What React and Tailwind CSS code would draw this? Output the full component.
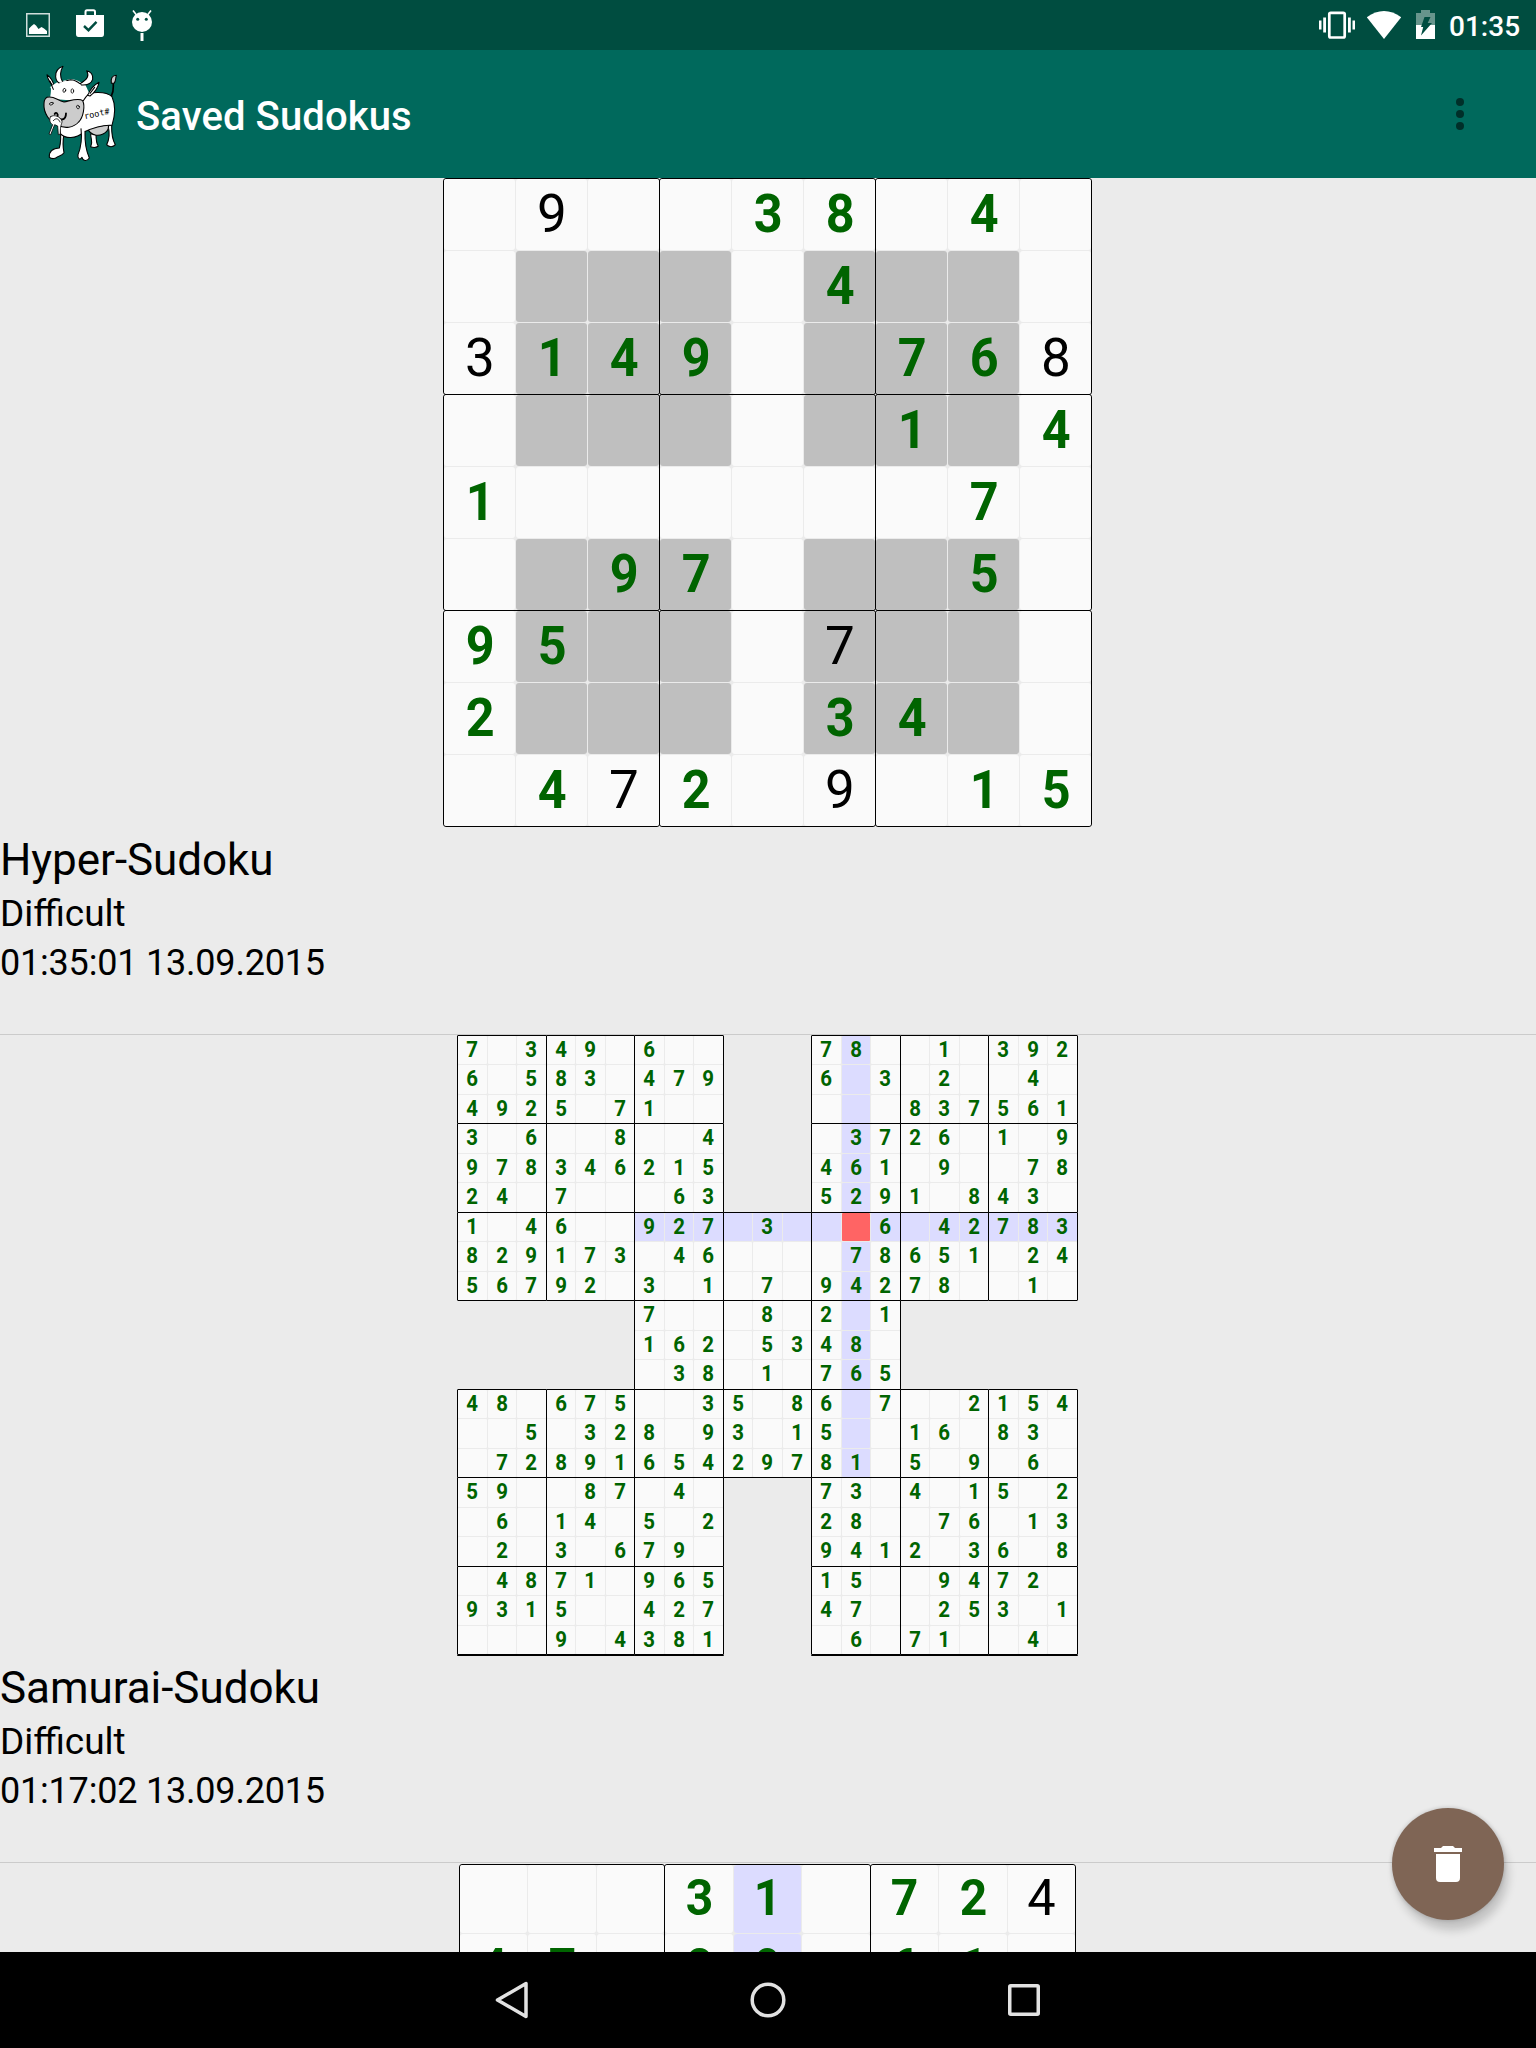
import React from "react";

const HYPER = [
  ".9..38.4.",
  ".....4...",
  "3149..768",
  "......1.4",
  "1......7.",
  "..97...5.",
  "95...7...",
  "2....34..",
  ".472.9.15",
];
const HYPER_ENTERED = ["0-1", "2-0", "2-8", "6-5", "8-2", "8-5"];

const SAMURAI = [
  "7.349.6..   78..1.392",
  "6.583.479   6.3.2..4.",
  "4925.71..   ...837561",
  "3.6..8..4   .3726.1.9",
  "978346215   461.9..78",
  "24.7...63   5291.843.",
  "1.46..927.3...6.42783",
  "829173.46....78651.24",
  "56792.3.1.7.94278..1.",
  "      7...8.2.1      ",
  "      162.5348.      ",
  "      .38.1.765      ",
  "48.675..35.86.7..2154",
  "..5.328.93.15..16.83.",
  ".7289165429781.5.9.6.",
  "59..87.4.   73.4.15.2",
  ".6.14.5.2   28..76.13",
  ".2.3.679.   9412.36.8",
  ".4871.965   15..9472.",
  "9315..427   47..253.1",
  "...9.4381   .6.71..4.",
];

const THIRD = ["...31.724", "47.89.61.", "........."];

const isHyperCell = (r, c) => r % 4 !== 0 && c % 4 !== 0;

const hyperTone = (r, c) => (isHyperCell(r, c) ? "bg-[#bfbfbf]" : "bg-[#fafafa]");
const samuraiTone = (r, c) => {
  if (r === 6 && c === 13) return "bg-[#ff6464]";
  if ((r === 6 && c >= 6) || (c === 13 && r < 15)) return "bg-[#dcdcff]";
  return "bg-[#fafafa]";
};
const thirdTone = (r, c) => (c === 4 ? "bg-[#dcdcff]" : "bg-[#fafafa]");

function Board({ rows, boardClass, boxClass, lastRowClass = "", boxCols, boxRows, cellClass, digitClass, tone, entered }) {
  const boxes = [];
  for (let br = 0; br < rows.length / 3; br++) {
    for (let bc = 0; bc < rows[0].length / 3; bc++) boxes.push([br, bc]);
  }
  return (
    <div className={boardClass}>
      {boxes.map(([br, bc]) => {
        if (rows[br * 3][bc * 3] === " ") return <div key={br + "-" + bc} />;
        const edge = br * 3 + 3 === rows.length ? lastRowClass : "";
        return (
          <div
            key={br + "-" + bc}
            className={`-mr-px -mb-px grid gap-px border border-black ${boxClass} ${edge} ${boxCols[bc % 2]} ${boxRows[br % 2]}`}
          >
            {[0, 1, 2, 3, 4, 5, 6, 7, 8].map((i) => {
              const r = br * 3 + Math.floor(i / 3);
              const c = bc * 3 + (i % 3);
              const value = rows[r][c];
              return (
                <div key={i} className={`flex items-center justify-center ${cellClass} ${tone(r, c)}`}>
                  {value !== "." && (
                    <span
                      className={`${digitClass} ${
                        entered.includes(r + "-" + c) ? "text-black" : "scale-x-95 font-bold text-[#006400]"
                      }`}
                    >
                      {value}
                    </span>
                  )}
                </div>
              );
            })}
          </div>
        );
      })}
    </div>
  );
}

function Caption({ name, level, time }) {
  return (
    <div className="h-[207px] text-black">
      <div className="h-[64px] text-[44px] leading-[66px] tracking-[-0.05px]">{name}</div>
      <div className="h-[46px] text-[37px] leading-[46px]">{level}</div>
      <div className="h-[51px] text-[36px] leading-[53px] tracking-[-0.2px]">{time}</div>
    </div>
  );
}

function Cow() {
  return (
    <svg className="h-[100px] w-[80px]" viewBox="120 192 240 300" fill="#fff" stroke="#000" strokeWidth="3.2" strokeLinecap="round" strokeLinejoin="round">
      <path d="M334 288C343 272 339 262 340 248" fill="none" strokeWidth="5" />
      <path d="M334 250C332 236 336 226 349 226C346 236 348 244 342 250Z" fill="#ccc" />
      <path d="M272 402C272 420 280 424 272 440C282 444 290 442 295 438C288 430 288 418 288 402Z" />
      <path d="M324 376C330 400 328 418 320 434C326 442 340 442 346 434C340 424 334 410 335 376Z" />
      <path d="M262 384C272 410 302 412 320 394C326 388 326 382 326 374Z" fill="#ccc" />
      <path d="M180 384C184 412 182 430 178 444C158 444 146 456 148 472C156 478 166 476 170 472C174 468 186 468 192 458C188 440 188 424 192 400Z" />
      <path d="M244 290C268 274 318 272 336 290C346 312 346 344 336 376C312 374 282 382 252 396C226 418 196 416 182 402L176 370Z" />
      <path d="M243 386C246 412 244 440 234 464C232 476 240 482 246 472C248 482 260 486 268 474C258 452 254 424 255 394" />
      <path d="M164 262C152 250 142 240 141 224C152 232 160 246 164 262ZM262 286C270 270 280 256 297 247C294 264 286 276 270 288Z" />
      <path d="M149 262C156 258 152 282 150 296L246 304C254 296 262 288 266 276L256 254C240 248 238 240 212 238C194 240 190 246 178 242Z" stroke="none" />
      <path d="M188 246C180 232 180 214 189 199C174 204 166 216 167 230C168 242 174 248 180 250C190 250 194 240 212 239C230 240 234 246 244 255C260 256 274 250 278 238C280 224 272 214 260 212C268 226 264 238 240 251" />
      <path d="M264 284C256 292 254 296 250 302M150 244L160 268M284 262L270 280" fill="none" />
      <path d="M178 249L196 242L244 254L240 262L178 262Z" stroke="none" />
      <path d="M141 292C160 286 170 300 192 306C212 302 236 292 248 302C256 318 250 352 236 366C220 384 194 386 174 376C148 366 130 338 132 312C132 302 134 296 141 292Z" fill="#ccc" />
      <ellipse cx="193" cy="271" rx="4" ry="6" transform="rotate(15 193 271)" strokeWidth="2.4" />
      <ellipse cx="217" cy="273" rx="4" ry="6.5" strokeWidth="2.4" />
      <ellipse cx="154" cy="311" rx="6" ry="3.500" transform="rotate(-20 154 311)" fill="#ddd" strokeWidth="2.4" />
      <ellipse cx="234" cy="321" rx="4" ry="5.500" transform="rotate(-20 234 321)" fill="#ddd" strokeWidth="2.4" />
      <path d="M164 342C168 334 176 342 172 350C176 360 198 366 198 340" fill="none" strokeWidth="5.500" />
      <path d="M152 350C162 342 182 350 186 364C186 372 180 376 181 402L175 404L173 378L164 374L152 404L147 402L158 374C150 370 146 358 152 350Z" strokeWidth="2.4" />
      <path d="M160 362C168 352 176 356 180 366" fill="none" strokeWidth="2.4" />
      <text x="254" y="358" transform="rotate(-12 254 358)" fill="#000" stroke="none" fontSize="26" fontFamily="'DejaVu Sans Mono', monospace">root#</text>
    </svg>
  );
}

function StatusBar() {
  return (
    <div className="flex h-[50px] shrink-0 items-start justify-between bg-[#004d40] text-white">
      <div className="flex pl-[26px]">
        <svg className="mt-[13px] h-[24px] w-[24px]" viewBox="0 0 24 24">
          <rect x="0.75" y="0.75" width="22.5" height="22.5" fill="none" stroke="#cfdedb" strokeWidth="1.5" />
          <path d="M3 21V15.5L5.5 13L8 11L10 12.5L12.5 16L15.5 14L18 15.5L21 18V21Z" fill="#fff" />
        </svg>
        <svg className="mt-[9px] ml-[26px] h-[28px] w-[28px]" viewBox="0 0 28 28">
          <path d="M9.500 6V3Q9.500 1.300 11 1.300H17.500Q19 1.300 19 3V6" fill="none" stroke="#fff" strokeWidth="2" />
          <path d="M0 6H28V25Q28 28 25.500 28H2.500Q0 28 0 25Z" fill="#fff" />
          <path d="M8 17L12.500 21.200L20.500 12.800" fill="none" stroke="#004d40" strokeWidth="2.400" />
        </svg>
        <svg className="mt-[9px] ml-[26px] h-[33px] w-[24px]" viewBox="0 0 24 33">
          <circle cx="12" cy="13" r="10" fill="#fff" />
          <path d="M3 1.500L6.500 6M21 1.500L17.500 6" stroke="#fff" strokeWidth="1.600" />
          <circle cx="7.700" cy="10.300" r="1.500" fill="#004d40" />
          <circle cx="16.300" cy="10.300" r="1.500" fill="#004d40" />
          <path d="M12 24V32" stroke="#fff" strokeWidth="3" />
        </svg>
      </div>
      <div className="flex pr-[16px]">
        <svg className="mt-[11px] h-[28px] w-[36px]" viewBox="0 0 36 28">
          <rect x="10.300" y="1.800" width="15.400" height="24.700" rx="1.500" fill="none" stroke="#fff" strokeWidth="2.700" />
          <path d="M0 9.500H2.500V18.500H0ZM4.200 6.500H7V21.500H4.200ZM29 6.500H31.800V21.500H29ZM33.500 9.500H36V18.500H33.500Z" fill="#fff" />
        </svg>
        <svg className="mt-[11px] ml-[11px] h-[28px] w-[36px]" viewBox="0 0 36 28">
          <path d="M18 28L0.800 6.200Q18 -6.200 35.200 6.200Z" fill="#fff" />
        </svg>
        <svg className="mt-[10px] ml-[14px] h-[29px] w-[19px]" viewBox="0 0 19 29">
          <path d="M5 0H14V3H19V15H0V3H5Z" fill="#67958c" />
          <path d="M0 15H19V29H0Z" fill="#fff" />
          <path d="M8.500 7H14.500L11.700 13H16L5 25.500L7.200 17H5Z" fill="#004d40" />
        </svg>
        <span className="ml-[14px] h-[50px] w-[71px] text-[28px] leading-[54px] font-medium whitespace-nowrap">01:35</span>
      </div>
    </div>
  );
}

export default function App() {
  return (
    <div className="relative flex h-[2048px] w-[1536px] flex-col overflow-hidden bg-[#ebebeb] font-['Roboto',sans-serif]">
      <StatusBar />
      <header className="flex h-[128px] shrink-0 items-center justify-between bg-[#00695c]">
        <div className="flex items-center pl-[40px]">
          <Cow />
          <h1 className="ml-[16px] pt-[6px] text-[40px] leading-[48px] font-medium tracking-[0.1px] whitespace-nowrap text-white">Saved Sudokus</h1>
        </div>
        <div className="mr-[72px] flex flex-col gap-[4px]">
          <span className="h-2 w-2 rounded-full bg-[#002f29]" />
          <span className="h-2 w-2 rounded-full bg-[#002f29]" />
          <span className="h-2 w-2 rounded-full bg-[#002f29]" />
        </div>
      </header>

      <main className="h-[1774px] shrink-0 overflow-hidden">
        <section className="h-[857px] border-b border-[#cbcbcb]">
          <div className="h-[649px] pl-[443px]">
            <Board
              rows={HYPER}
              boardClass="grid w-[648px] grid-cols-[repeat(3,216px)] grid-rows-[repeat(3,216px)]"
              boxClass="rounded-[3px]"
              boxCols={["grid-cols-[71px_71px_71px]", "grid-cols-[71px_71px_71px]"]}
              boxRows={["grid-rows-[71px_71px_71px]", "grid-rows-[71px_71px_71px]"]}
              cellClass="rounded-[3px] pl-px"
              digitClass="text-[53px] leading-[71px]"
              tone={hyperTone}
              entered={HYPER_ENTERED}
            />
          </div>
          <Caption name="Hyper-Sudoku" level="Difficult" time="01:35:01 13.09.2015" />
        </section>

        <section className="h-[828px] border-b border-[#cbcbcb]">
          <div className="h-[620px] pl-[457px]">
            <Board
              rows={SAMURAI}
              boardClass="grid w-[620px] grid-cols-[repeat(3,89px_88px)_89px] grid-rows-[repeat(3,88px_89px)_88px]"
              boxClass="rounded-[1px]"
              lastRowClass="shadow-[0_1px_0_#000]"
              boxCols={["grid-cols-[29px_28px_29px]", "grid-cols-[28px_29px_28px]"]}
              boxRows={["grid-rows-[28px_29px_28px]", "grid-rows-[29px_28px_29px]"]}
              cellClass="rounded-[1px] pb-px"
              digitClass="text-[21.5px] leading-[28px]"
              tone={samuraiTone}
              entered={[]}
            />
          </div>
          <Caption name="Samurai-Sudoku" level="Difficult" time="01:17:02 13.09.2015" />
        </section>

        <section className="pt-px pl-[459px]">
          <Board
            rows={THIRD}
            boardClass="grid w-[617px] grid-cols-[205px_206px_205px]"
            boxClass="rounded-[3px]"
            boxCols={["grid-cols-[67px_68px_67px]", "grid-cols-[68px_67px_68px]"]}
            boxRows={["grid-rows-[68px_67px_68px]", "grid-rows-[68px_67px_68px]"]}
            cellClass="rounded-[3px] pb-[2px]"
            digitClass="text-[50.5px] leading-[68px]"
            tone={thirdTone}
            entered={["0-8"]}
          />
        </section>
      </main>

      <nav className="flex h-[96px] shrink-0 items-center justify-center gap-[216px] bg-black">
        <svg className="h-[40px] w-[40px]" viewBox="0 0 40 40" fill="none" stroke="#e2e2e2" strokeWidth="3.500" strokeLinejoin="round">
          <path d="M34 3.500V36.500L5.500 20Z" />
        </svg>
        <svg className="h-[40px] w-[40px]" viewBox="0 0 40 40" fill="none" stroke="#e2e2e2" strokeWidth="3.500">
          <circle cx="20" cy="20" r="15.800" />
        </svg>
        <svg className="h-[40px] w-[40px]" viewBox="0 0 40 40" fill="none" stroke="#e2e2e2" strokeWidth="3.500">
          <rect x="5.750" y="5.750" width="28.500" height="28.500" rx="1" />
        </svg>
      </nav>

      <button className="absolute top-[1808px] left-[1392px] flex h-[112px] w-[112px] items-center justify-center rounded-full bg-[#7f6555] shadow-[4px_10px_10px_rgba(0,0,0,0.18),0_0_4px_rgba(0,0,0,0.2)]">
        <svg className="h-[36px] w-[28px]" viewBox="0 0 28 36" fill="#fff">
          <path d="M0 2H7L9 0H19L21 2H28V6H0ZM2 8H26V32Q26 36 22 36H6Q2 36 2 32Z" />
        </svg>
      </button>
    </div>
  );
}
